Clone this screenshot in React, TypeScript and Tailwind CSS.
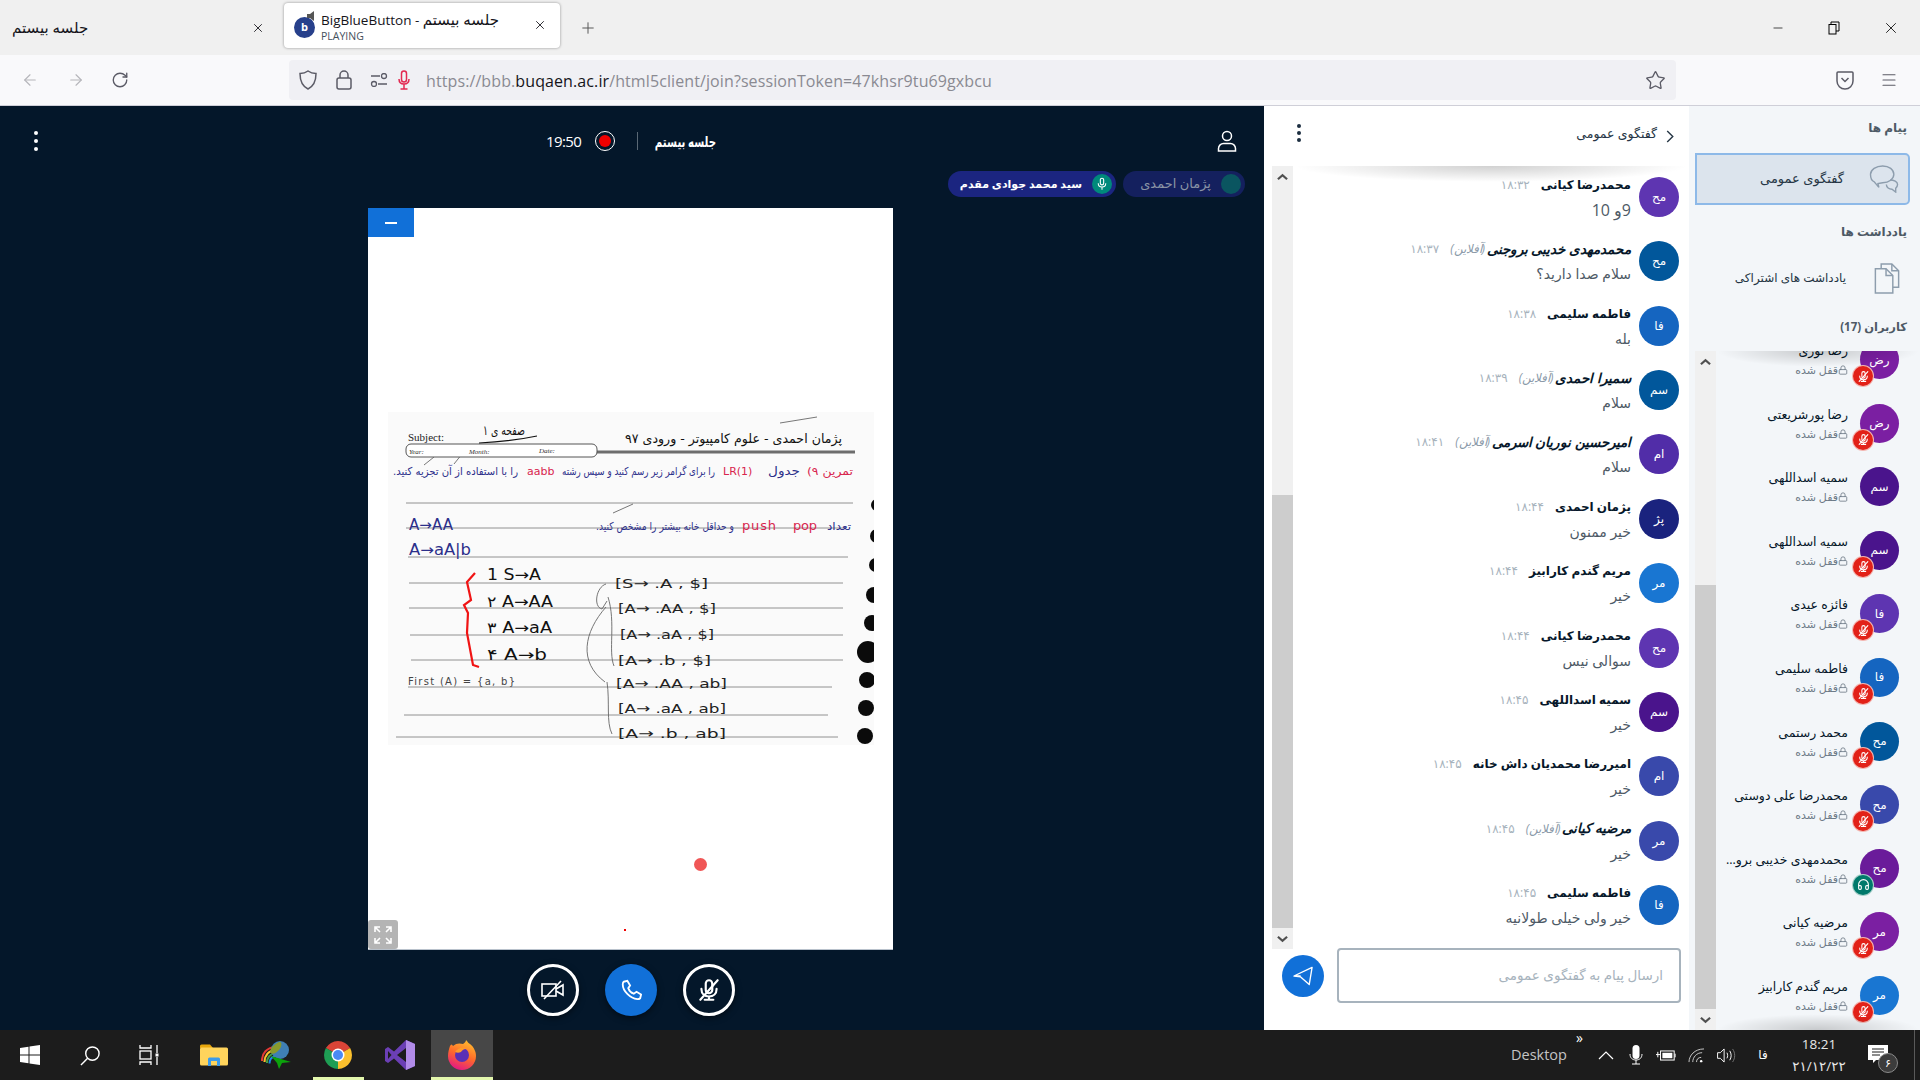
import { ArrowLeft, ArrowRight, Headphones, Lock, Menu, Minus, Plus, RotateCw, Star, X } from "lucide-react";

const messages = [
  { name: "محمدرضا کیانی", time: "۱۸:۳۲", text: "9\u0648 10", color: "bg-[#5e35b1]", short: "مح", big: true },
  { name: "محمدمهدی خدیبی بروجنی", time: "۱۸:۳۷", text: "سلام صدا دارید؟", color: "bg-[#01579b]", short: "مح", offline: true },
  { name: "فاطمه سلیمی", time: "۱۸:۳۸", text: "بله", color: "bg-[#1565c0]", short: "فا" },
  { name: "سمیرا احمدی", time: "۱۸:۳۹", text: "سلام", color: "bg-[#01579b]", short: "سم", offline: true },
  { name: "امیرحسین نوریان اسرمی", time: "۱۸:۴۱", text: "سلام", color: "bg-[#512da8]", short: "ام", offline: true },
  { name: "پژمان احمدی", time: "۱۸:۴۴", text: "خیر ممنون", color: "bg-[#1a237e]", short: "پژ" },
  { name: "مریم گندم کارابیز", time: "۱۸:۴۴", text: "خیر", color: "bg-[#1976d2]", short: "مر" },
  { name: "محمدرضا کیانی", time: "۱۸:۴۴", text: "سوالی نیس", color: "bg-[#5e35b1]", short: "مح" },
  { name: "سمیه اسداللهی", time: "۱۸:۴۵", text: "خیر", color: "bg-[#4a148c]", short: "سم" },
  { name: "امیررضا محمدیان داش خانه", time: "۱۸:۴۵", text: "خیر", color: "bg-[#3949ab]", short: "ام" },
  { name: "مرضیه کیانی", time: "۱۸:۴۵", text: "خیر", color: "bg-[#3949ab]", short: "مر", offline: true },
  { name: "فاطمه سلیمی", time: "۱۸:۴۵", text: "خیر ولی خیلی طولانیه", color: "bg-[#1565c0]", short: "فا" },
];

const users = [
  { name: "رضا نوری", color: "bg-[#7b1fa2]", short: "رض", badge: "mute" },
  { name: "رضا پورشریعتی", color: "bg-[#7b1fa2]", short: "رض", badge: "mute" },
  { name: "سمیه اسداللهی", color: "bg-[#4a148c]", short: "سم" },
  { name: "سمیه اسداللهی", color: "bg-[#4a148c]", short: "سم", badge: "mute" },
  { name: "فائزه عیدی", color: "bg-[#5e35b1]", short: "فا", badge: "mute" },
  { name: "فاطمه سلیمی", color: "bg-[#1565c0]", short: "فا", badge: "mute" },
  { name: "محمد رستمی", color: "bg-[#01579b]", short: "مح", badge: "mute" },
  { name: "محمدرضا علی دوستی", color: "bg-[#3949ab]", short: "مح", badge: "mute" },
  { name: "محمدمهدی خدیبی برو...", color: "bg-[#6a1b9a]", short: "مح", badge: "listen" },
  { name: "مرضیه کیانی", color: "bg-[#7b1fa2]", short: "مر", badge: "mute" },
  { name: "مریم گندم کارابیز", color: "bg-[#1976d2]", short: "مر", badge: "mute" },
];

const items = [
  { x: 227, y: 176, w: 93, t: "[S→ .A , $]" },
  { x: 230, y: 201, w: 98, t: "[A→ .AA , $]" },
  { x: 232, y: 227, w: 94, t: "[A→ .aA , $]" },
  { x: 230, y: 253, w: 93, t: "[A→ .b , $]" },
  { x: 228, y: 276, w: 111, t: "[A→ .AA , ab]" },
  { x: 230, y: 301, w: 108, t: "[A→ .aA , ab]" },
  { x: 230, y: 326, w: 108, t: "[A→ .b , ab]" },
];

function MutedMic({ className }: { className?: string }) {
  return (
    <svg viewBox="0 0 24 24" fill="none" stroke="currentColor" strokeWidth="2" strokeLinecap="round" className={className}>
      <rect x="9" y="3" width="6" height="12" rx="3" />
      <path d="M5 11c0 4.500 3 7 7 7s7-2.500 7-7M12 18v3M8 21h8M4 21 20 3" />
    </svg>
  );
}

function ChevronScroll({ down }: { down?: boolean }) {
  return (
    <svg viewBox="0 0 12 8" className="w-[11px] h-[8px]" fill="none" stroke="#505050" strokeWidth="2.400">
      <path d={down ? "M1 1.500l5 4.500 5-4.500" : "M1 6.500l5-4.500 5 4.500"} />
    </svg>
  );
}

function Scrollbar({ thumbTop, thumbBottom }: { thumbTop: string; thumbBottom: string }) {
  return (
    <div className="w-[21px] h-full bg-[#f0f0f0] flex flex-col shrink-0">
      <div className="h-[21px] flex items-center justify-center shrink-0"><ChevronScroll /></div>
      <div className="flex-1 flex flex-col">
        <div className={thumbTop} />
        <div className={thumbBottom} />
      </div>
      <div className="h-[21px] flex items-center justify-center shrink-0"><ChevronScroll down /></div>
    </div>
  );
}

function ChatRow({ m }: { m: (typeof messages)[number] }) {
  return (
    <div className="h-[64.36px] flex items-start shrink-0" dir="rtl">
      <div className={`w-[40px] h-[40px] rounded-full ${m.color} text-white text-[12px] flex items-center justify-center shrink-0`}>{m.short}</div>
      <div className="mr-[8px]">
        <div className="h-[16px] flex items-center whitespace-nowrap">
          <span className={`font-bold text-[#06172a] ${m.offline ? "italic text-[13.500px]" : "text-[12px]"}`}>{m.name}</span>
          {m.offline && <span className="mr-[2px] text-[12px] italic text-[#8b9aa9]">(آفلاین)</span>}
          <span className="mr-[11px] text-[12px] text-[#a7b3bd]">{m.time}</span>
        </div>
        <div className={`mt-[7px] leading-[20px] text-[#4e5a66] whitespace-nowrap ${m.big ? "text-[16px]" : "text-[14px]"}`}>{m.text}</div>
      </div>
    </div>
  );
}

function UserRow({ u }: { u: (typeof users)[number] }) {
  return (
    <div className="h-[63.6px] flex items-start shrink-0" dir="rtl">
      <div className={`relative w-[39px] h-[39px] rounded-full ${u.color} text-white text-[12px] flex items-center justify-center shrink-0`}>
        {u.short}
        {u.badge === "mute" && (
          <div className="absolute left-[-7px] top-[26px] w-[20px] h-[20px] rounded-full bg-[#e22118] ring-1 ring-[#f3b5b0] flex items-center justify-center text-white">
            <MutedMic className="w-[13px] h-[13px]" />
          </div>
        )}
        {u.badge === "listen" && (
          <div className="absolute left-[-7px] top-[26px] w-[20px] h-[20px] rounded-full bg-[#00796b] ring-1 ring-[#a5cfc9] flex items-center justify-center text-white">
            <Headphones className="w-[13px] h-[13px]" />
          </div>
        )}
      </div>
      <div className="mr-[12px] pt-[3px]">
        <div className="h-[16px] text-[12.500px] leading-[16px] text-[#06172a] whitespace-nowrap">{u.name}</div>
        <div className="mt-[4px] flex items-center text-[11px] leading-[14px] text-[#6d7a87]">
          <Lock className="w-[10px] h-[10px]" />
          <span>قفل شده</span>
        </div>
      </div>
    </div>
  );
}

function NotesPhoto() {
  const rtl = { direction: "rtl" as const, textAnchor: "start" as const };
  const ink = "#2c2f8a";
  const red = "#d8254e";
  return (
    <svg viewBox="0 0 486 333" className="w-[486px] h-[333px] bg-[#fafafa]" fontFamily="'DejaVu Sans', sans-serif">
      <g stroke="#777" strokeWidth="0.800">
        <path d="M18 91H465M18 116H458M20 145H460M21 171H455M21 196H455M22 223H455M23 248H455M20 275H444M16 303H440M8 325H450" />
      </g>
      <path d="M392 11L429 5M225 101L245 92M36 53L46 45M66 52L74 42" stroke="#555" strokeWidth="0.800" fill="none" />
      <path d="M208 40H467" stroke="#6d6d6d" strokeWidth="3" />
      <rect x="18" y="32" width="191" height="13" rx="5" fill="#fff" stroke="#555" strokeWidth="1" />
      <text x="20" y="29" fontFamily="'Liberation Serif', serif" fontSize="11" fill="#222">Subject:</text>
      <text x="21" y="42" fontFamily="'Liberation Serif', serif" fontStyle="italic" fontSize="7" fill="#333">Year:</text>
      <text x="81" y="42" fontFamily="'Liberation Serif', serif" fontStyle="italic" fontSize="7" fill="#333">Month:</text>
      <text x="151" y="41" fontFamily="'Liberation Serif', serif" fontStyle="italic" fontSize="7" fill="#333">Date:</text>
      <text x="137" y="23" fontSize="13" fill="#111" style={rtl} textLength="42" lengthAdjust="spacingAndGlyphs">صفحه ی ۱</text>
      <path d="M91 31C110 30 130 28 149 24" stroke="#111" fill="none" strokeWidth="1.200" />
      <text x="454" y="31" fontSize="13" fill="#111" style={rtl} textLength="217" lengthAdjust="spacingAndGlyphs">پژمان احمدی - علوم کامپیوتر - ورودی ۹۷</text>

      <text x="465" y="63" fontSize="11" fill={red} style={rtl} textLength="46" lengthAdjust="spacingAndGlyphs">تمرین ۹)</text>
      <text x="412" y="63" fontSize="12" fill={ink} style={rtl} textLength="32" lengthAdjust="spacingAndGlyphs">جدول</text>
      <text x="335" y="63" fontSize="11" fill={red}>LR(1)</text>
      <text x="327" y="63" fontSize="11" fill={ink} style={rtl} textLength="153" lengthAdjust="spacingAndGlyphs">را برای گرامر زیر رسم کنید و سپس رشته</text>
      <text x="139" y="63" fontSize="11" fill={red}>aabb</text>
      <text x="130" y="63" fontSize="11" fill={ink} style={rtl} textLength="125" lengthAdjust="spacingAndGlyphs">را با استفاده از آن تجزیه کنید.</text>

      <text x="21" y="118" fontSize="15" fill={ink} textLength="44" lengthAdjust="spacingAndGlyphs">A→AA</text>
      <text x="463" y="118" fontSize="11" fill={ink} style={rtl} textLength="24" lengthAdjust="spacingAndGlyphs">تعداد</text>
      <text x="405" y="118" fontSize="13" fill={red} textLength="24">pop</text>
      <text x="354" y="118" fontSize="13" fill={red} textLength="34">push</text>
      <text x="346" y="118" fontSize="11" fill={ink} style={rtl} textLength="138" lengthAdjust="spacingAndGlyphs">و حداقل خانه بیشتر را مشخص کنید.</text>
      <text x="21" y="143" fontSize="15" fill={ink} textLength="62" lengthAdjust="spacingAndGlyphs">A→aA|b</text>

      <path d="M87 161L79 170L83 188L76 193L80 201L79 221L85 253L91 255" fill="none" stroke="#f01414" strokeWidth="2.200" />
      <g fontSize="15" fill="#111">
        <text x="99" y="168" textLength="54" lengthAdjust="spacingAndGlyphs">1 S→A</text>
        <text x="99" y="195" textLength="66" lengthAdjust="spacingAndGlyphs">۲ A→AA</text>
        <text x="99" y="221" textLength="65" lengthAdjust="spacingAndGlyphs">۳ A→aA</text>
        <text x="99" y="248" textLength="60" lengthAdjust="spacingAndGlyphs">۴ A→b</text>
      </g>
      <g fontSize="13" fill="#222">
        {items.map((it) => (
          <text key={it.t} x={it.x} y={it.y} textLength={it.w} lengthAdjust="spacingAndGlyphs">{it.t}</text>
        ))}
      </g>
      <text x="20" y="273" fontSize="10" fill="#444" textLength="107">First (A) = {"{a, b}"}</text>
      <path d="M218 172C208 175 205 195 214 197M214 197L219 189M218 195C196 220 190 250 217 270M220 185C228 210 220 240 226 254M219 270C222 290 218 310 224 322" fill="none" stroke="#666" strokeWidth="0.900" />
      <g fill="#0b0b0b">
        <circle cx="489" cy="93" r="6" />
        <circle cx="489" cy="124" r="7" />
        <circle cx="488" cy="153" r="7" />
        <circle cx="486" cy="183" r="8" />
        <circle cx="484" cy="211" r="8" />
        <circle cx="480" cy="240" r="11" />
        <circle cx="479" cy="268" r="8" />
        <circle cx="478" cy="296" r="8" />
        <circle cx="477" cy="324" r="8" />
      </g>
    </svg>
  );
}

function FolderIcon() {
  return (
    <svg viewBox="0 0 28 22" className="w-[28px] h-[22px]">
      <path d="M0 2a1.500 1.500 0 0 1 1.500-1.500H10L13 4H0z" fill="#e8a70c" />
      <rect y="3.500" width="28" height="18" rx="1.500" fill="#ffd45c" />
      <path d="M8 22V15a1.500 1.500 0 0 1 1.500-1.500h9A1.500 1.500 0 0 1 20 15v7h-3v-5h-6v5z" fill="#3d9be9" />
    </svg>
  );
}

function IdmIcon() {
  return (
    <svg viewBox="0 0 30 28" className="w-[30px] h-[28px]">
      <path d="M1 20C1 12 6 7 14 6" fill="none" stroke="#e53935" strokeWidth="2.200" />
      <path d="M3.500 21C3.500 15 7 10 14 9" fill="none" stroke="#fbc02d" strokeWidth="2.200" />
      <path d="M6 22C6 17 9 13 14 12" fill="none" stroke="#43a047" strokeWidth="2.200" />
      <path d="M8.500 22.500C8.500 19 10.500 16 14 15" fill="none" stroke="#1e88e5" strokeWidth="2" />
      <circle cx="19" cy="9" r="9" fill="#3f7fb5" />
      <path d="M11 6c3-3 6-5 8-5s2 5-1 8-6 5-8 3 0-4 1-6z" fill="#8a9a2d" />
      <path d="M10 15L30 21L21 22L18 28L16 22z" fill="#0ca30c" />
    </svg>
  );
}

function ChromeIcon() {
  return (
    <svg viewBox="0 0 28 28" className="w-[28px] h-[28px]">
      <path d="M14 14L1.880 7A14 14 0 0 1 26.120 7Z" fill="#db4437" />
      <path d="M14 14L26.120 7A14 14 0 0 1 14 28Z" fill="#fbc02d" />
      <path d="M14 14L14 28A14 14 0 0 1 1.880 7Z" fill="#1e9e54" />
      <circle cx="14" cy="14" r="6.500" fill="#fff" />
      <circle cx="14" cy="14" r="5" fill="#4a8af4" />
    </svg>
  );
}

function VsIcon() {
  return (
    <svg viewBox="0 0 30 30" className="w-[30px] h-[30px]">
      <path d="M21 0L30 4V26L21 30L9 18.500L3 23L0 21V9L3 7L9 11.500ZM21 8L12 15L21 22ZM3 11V19L6.500 15Z" fill="#6b3fb5" fillRule="evenodd" />
      <path d="M21 0L30 4V26L21 30V22V8Z" fill="#b18be8" />
    </svg>
  );
}

function FirefoxIcon() {
  return (
    <svg viewBox="0 0 30 30" className="w-[30px] h-[30px]">
      <defs>
        <linearGradient id="ff" x1="0.700" y1="0" x2="0.300" y2="1">
          <stop offset="0" stopColor="#ffbd2e" />
          <stop offset="0.500" stopColor="#ff6a2a" />
          <stop offset="1" stopColor="#e31587" />
        </linearGradient>
      </defs>
      <path d="M3 6C4 4 5 4 6 6C9 3 13 3 16 4C18 3 19 1 19 0C21 2 21 3 23 4C27 7 29 12 29 16A14 14 0 0 1 1 16C1 12 2 9 3 6Z" fill="url(#ff)" />
      <circle cx="15" cy="15" r="7" fill="#5b2fb5" />
      <path d="M8 12c2-4 8-6 12-3-3-.500-5 1-6 3-2 1-4 1-6 0z" fill="#ff9a2a" />
    </svg>
  );
}

export default function App() {
  return (
    <div className="w-[1920px] h-[1080px] flex flex-col overflow-hidden font-['Open_Sans','DejaVu_Sans',sans-serif]">
      {/* browser tabs */}
      <div className="h-[55px] bg-[#f0f0f0] flex items-center shrink-0">
        <div className="w-[284px] h-full flex items-center pl-[12px] pr-[19px] justify-between text-[#15141a]">
          <span dir="rtl" className="text-[15px]">جلسه بیستم</span>
          <X className="w-[14px] h-[14px]" strokeWidth={1.500} />
        </div>
        <div className="w-[276px] h-[45px] mb-[5px] bg-white rounded-[4px] shadow-[0_0_3px_rgba(0,0,0,0.4)] flex items-center pl-[10px] pr-[13px]">
          <div className="relative w-[21px] h-[21px] rounded-full bg-[#27408b] mr-[6px] mt-[4px] flex items-center justify-center text-white text-[11px] font-bold">
            b
            <svg viewBox="0 0 12 12" className="absolute -top-[7px] -right-[3px] w-[12px] h-[12px]" fill="#555"><path d="M1 4h3l4-3v10L4 8H1z" /></svg>
          </div>
          <div className="flex-1 flex flex-col pt-[3px] text-[#15141a]">
            <div className="text-[13.500px] leading-[18px] whitespace-nowrap" dir="ltr">
              BigBlueButton - <span className="text-[15px]">جلسه بیستم</span>
            </div>
            <div className="text-[10.500px] leading-[15px] text-[#44505c]">PLAYING</div>
          </div>
          <X className="w-[14px] h-[14px] text-[#15141a]" strokeWidth={1.500} />
        </div>
        <Plus className="ml-[19px] w-[18px] h-[18px] text-[#555]" strokeWidth={1.300} />
        <div className="ml-auto flex items-center text-black">
          <div className="w-[57px] flex justify-center"><Minus className="w-[14px] h-[14px]" strokeWidth={1.200} /></div>
          <div className="w-[56px] flex justify-center">
            <svg viewBox="0 0 12 14" className="w-[12px] h-[14px]" fill="none" stroke="#000"><path d="M3 3V1h8v9H8" /><rect x="1" y="3.500" width="7" height="9.500" /></svg>
          </div>
          <div className="w-[58px] flex justify-center"><X className="w-[18px] h-[18px]" strokeWidth={1.100} /></div>
        </div>
      </div>

      {/* browser toolbar */}
      <div className="h-[51px] bg-[#f9f9fb] border-b border-[#cfcfd8] flex items-center shrink-0">
        <div className="w-[289px] flex items-center pl-[21px] text-[#b5b5ba]">
          <ArrowLeft className="w-[18px] h-[18px]" strokeWidth={1.500} />
          <ArrowRight className="ml-[28px] w-[18px] h-[18px]" strokeWidth={1.500} />
          <RotateCw className="ml-[26px] w-[18px] h-[18px] text-[#5b5b66]" strokeWidth={1.800} />
        </div>
        <div className="w-[1387px] h-[40px] bg-[#f0f0f4] rounded-[4px] flex items-center pl-[10px] pr-[10px] text-[#5b5b66]">
          <svg viewBox="0 0 18 20" className="w-[18px] h-[20px]" fill="none" stroke="currentColor" strokeWidth="1.500"><path d="M9 1c2 1.500 5 2.500 8 2.500C17 11 15 16 9 19 3 16 1 11 1 3.500 4 3.500 7 2.500 9 1z" /></svg>
          <svg viewBox="0 0 16 20" className="ml-[19px] w-[16px] h-[20px]" fill="none" stroke="currentColor" strokeWidth="1.500"><rect x="1" y="8" width="14" height="11" rx="2" /><path d="M4 8V5a4 4 0 0 1 8 0v3" /></svg>
          <svg viewBox="0 0 18 14" className="ml-[18px] w-[18px] h-[14px]" fill="none" stroke="currentColor" strokeWidth="1.300"><path d="M1 3h9M8 11h9" /><circle cx="14" cy="3" r="2.500" /><circle cx="4" cy="11" r="2.500" /></svg>
          <svg viewBox="0 0 12 20" className="ml-[10px] w-[12px] h-[20px]" fill="none" stroke="#e22850" strokeWidth="1.500"><rect x="3.500" y="1" width="5" height="11" rx="2.500" /><path d="M1 9c0 3 2 5 5 5s5-2 5-5M6 14v5M2.500 19h7" /></svg>
          <div className="ml-[16px] pt-[2px] text-[16px] tracking-[0.1px] text-[#8a8a92] whitespace-nowrap">
            https://bbb.<span className="text-[#15141a]">buqaen.ac.ir</span>/html5client/join?sessionToken=47khsr9tu69gxbcu
          </div>
          <Star className="ml-auto w-[21px] h-[21px]" strokeWidth={1.500} />
        </div>
        <div className="flex items-center text-[#5b5b66]">
          <div className="ml-[160px] w-[18px]">
            <svg viewBox="0 0 18 20" className="w-[18px] h-[20px]" fill="none" stroke="currentColor" strokeWidth="1.500"><path d="M2 2h14a1 1 0 0 1 1 1v8a8 8 0 0 1-16 0V3a1 1 0 0 1 1-1z" /><path d="M5.500 8l3.500 3.500L12.500 8" /></svg>
          </div>
          <Menu className="ml-[26px] w-[18px] h-[18px]" strokeWidth={1.500} />
        </div>
      </div>

      {/* meeting */}
      <div className="flex-1 flex min-h-0">
        {/* presentation area */}
        <div className="w-[1264px] bg-[#04172a] flex flex-col shrink-0">
          <div className="h-[65px] flex items-center justify-between pl-[31px] pr-[27px] pt-[5px] shrink-0 text-white">
            <div className="flex flex-col gap-[4px] w-[10px] items-center">
              <div className="w-[4px] h-[4px] rounded-full bg-white" />
              <div className="w-[4px] h-[4px] rounded-full bg-white" />
              <div className="w-[4px] h-[4px] rounded-full bg-white" />
            </div>
            <div className="flex items-center ml-[4px]">
              <span className="text-[15px] tracking-[-0.6px] w-[35px]">19:50</span>
              <div className="ml-[14px] w-[20px] h-[20px] rounded-full border border-white flex items-center justify-center">
                <div className="w-[12px] h-[12px] rounded-full bg-[#f00000]" />
              </div>
              <div className="ml-[22px] w-px h-[18px] bg-[#5a6875]" />
              <div className="ml-[18px] w-[60px] flex justify-end whitespace-nowrap">
                <span className="text-[15px] font-bold origin-right scale-x-[0.68] shrink-0" dir="rtl">جلسه بیستم</span>
              </div>
            </div>
            <svg viewBox="0 0 20 22" className="w-[20px] h-[22px]" fill="none" stroke="#fff" strokeWidth="1.500">
              <circle cx="10" cy="6" r="4.500" />
              <path d="M1.500 21v-2.500c0-3 2.500-5 5-5h7c2.500 0 5 2 5 5V21z" />
            </svg>
          </div>
          <div className="h-[26px] flex justify-end gap-[7px] pr-[19px] shrink-0">
            <div className="h-[26px] w-[168px] rounded-[13px] bg-[#1b2580] flex items-center justify-end pr-[4px] text-white text-[11px] font-bold" dir="ltr">
              <span dir="rtl" className="whitespace-nowrap">سید محمد جوادی مقدم</span>
              <div className="ml-[10px] w-[20px] h-[20px] rounded-full bg-[#00897b] flex items-center justify-center">
                <svg viewBox="0 0 12 16" className="w-[10px] h-[14px]" fill="none" stroke="#fff" strokeWidth="1.300"><rect x="4" y="1" width="4" height="8" rx="2" /><path d="M1.500 7c0 3 2 4.500 4.500 4.500S10.500 10 10.500 7M6 11.500V15" /></svg>
              </div>
            </div>
            <div className="h-[26px] w-[122px] rounded-[13px] bg-[#14205e] flex items-center justify-end pr-[4px] text-[#8a94a5] text-[13px]" dir="ltr">
              <span dir="rtl" className="whitespace-nowrap">پژمان احمدی</span>
              <div className="ml-[10px] w-[20px] h-[20px] rounded-full bg-[#0a5560]" />
            </div>
          </div>
          <div className="mt-[11px] flex justify-center pr-[3px]">
            <div className="relative w-[525px] h-[742px] bg-white flex items-center justify-center border-b border-[#b9c2cc]">
              <NotesPhoto />
              <div className="absolute left-0 top-0 w-[46px] h-[29px] bg-[#1170d8] flex items-center justify-center">
                <div className="w-[12px] h-[2px] bg-white" />
              </div>
              <div className="absolute left-0 bottom-0 w-[30px] h-[29px] bg-[#b4b4b4] rounded-[3px] flex items-center justify-center">
                <svg viewBox="0 0 20 20" className="w-[20px] h-[20px]" fill="none" stroke="#fff" strokeWidth="1.600"><path d="M2 7V2h5M2 2l5 5M18 7V2h-5M18 2l-5 5M2 13v5h5M2 18l5-5M18 13v5h-5M18 18l-5-5" /></svg>
              </div>
              <div className="absolute left-[326px] top-[650px] w-[13px] h-[13px] rounded-full bg-[#f05656]" />
              <div className="absolute left-[256px] top-[721px] w-[2px] h-[2px] bg-[#f00000]" />
            </div>
          </div>
          <div className="mt-[14px] flex justify-center gap-[26px] pr-[3px]">
            <div className="w-[52px] h-[52px] rounded-full border-[3px] border-white flex items-center justify-center shadow-[0_2px_6px_rgba(0,0,0,0.5)]">
              <svg viewBox="0 0 24 20" className="w-[24px] h-[20px]" fill="none" stroke="#fff" strokeWidth="1.600"><rect x="1" y="4" width="14" height="12" /><path d="M15 9l7-4v10l-7-4M3 19L20 1" /></svg>
            </div>
            <div className="w-[52px] h-[52px] rounded-full bg-[#1170d8] flex items-center justify-center shadow-[0_2px_6px_rgba(0,0,0,0.5)]">
              <svg viewBox="0 0 24 24" className="w-[22px] h-[22px]" fill="none" stroke="#fff" strokeWidth="2"><path d="M4 3l4-1 3 5-2 3c1 3 3 5 6 6l3-2 5 3-1 4c-1 1-2 1-3 1C11 21 3 13 3 6c0-1 0-2 1-3z" /></svg>
            </div>
            <div className="w-[52px] h-[52px] rounded-full border-[3px] border-white flex items-center justify-center shadow-[0_2px_6px_rgba(0,0,0,0.5)] text-white">
              <MutedMic className="w-[26px] h-[26px]" />
            </div>
          </div>
        </div>

        {/* chat panel */}
        <div className="w-[425px] bg-white flex flex-col shrink-0">
          <div className="h-[60px] flex items-start justify-between pl-[33px] pr-[15px] pt-[18px] shrink-0">
            <div className="flex flex-col gap-[3px]">
              <div className="w-[4px] h-[4px] rounded-full bg-[#1c2e40]" />
              <div className="w-[4px] h-[4px] rounded-full bg-[#1c2e40]" />
              <div className="w-[4px] h-[4px] rounded-full bg-[#1c2e40]" />
            </div>
            <div className="flex items-center gap-[9px] pt-[1px]">
              <span className="text-[12.500px] text-[#263645]" dir="rtl">گفتگوی عمومی</span>
              <svg viewBox="0 0 8 14" className="w-[8px] h-[13px] mt-[4px]" fill="none" stroke="#263645" strokeWidth="1.500"><path d="M1 1l6 6-6 6" /></svg>
            </div>
          </div>
          <div className="h-[783px] pl-[8px] flex shrink-0">
            <Scrollbar thumbTop="h-[308px] bg-[#f0f0f0]" thumbBottom="flex-1 bg-[#cdcdcd]" />
            <div className="relative flex-1 flex flex-col pt-[11px] pr-[10px] overflow-hidden">
              <div className="absolute left-0 right-0 top-0 h-[16px] bg-[radial-gradient(ellipse_at_top,rgba(0,0,0,0.18),rgba(0,0,0,0)_70%)]" />
              {messages.map((m, i) => (
                <ChatRow key={i} m={m} />
              ))}
            </div>
          </div>
          <div className="-mt-[1px] flex pl-[18px] pr-[8px]">
            <div className="mt-[7px] w-[42px] h-[42px] rounded-full bg-[#1170d8] flex items-center justify-center">
              <svg viewBox="0 0 22 20" className="w-[21px] h-[20px]" fill="none" stroke="#fff" strokeWidth="1.400"><path d="M1 10L20 1L17 19L8 11ZM1 10H8" strokeLinejoin="round" /></svg>
            </div>
            <div className="ml-[13px] flex-1 h-[55px] border-2 border-[#a7b3bd] rounded-[4px] flex items-center pr-[16px] text-[13.500px] text-[#a7b3bd]" dir="rtl">
              ارسال پیام به گفتگوی عمومی
            </div>
          </div>
        </div>

        {/* sidebar */}
        <div className="flex-1 bg-[#f3f6f9] flex flex-col min-w-0">
          <div className="h-[47px] pl-[13px] pr-[13px] pt-[13px] text-[12px] font-bold text-[#4e5a66]" dir="rtl">پیام ها</div>
          <div className="ml-[6px] mr-[10px] h-[52px] bg-[#dce4ed] border-2 border-[#8db9e8] rounded-r-[5px] flex items-center justify-end pr-[8px] shrink-0">
            <span className="text-[13px] text-[#263645]" dir="rtl">گفتگوی عمومی</span>
            <svg viewBox="0 0 32 30" className="ml-[25px] w-[31px] h-[28px]" fill="none" stroke="#8d9dad" strokeWidth="1.500">
              <path d="M14 1c7 0 12 4 12 9s-5 9-12 9l-5 1 1 4-5-6c-3-1-4-5-4-8 0-5 6-9 13-9z" />
              <path d="M22 16c4 0 8 2 8 5 0 2-1 3-2 4v4l-4-3c-3 0-6-2-6-5" />
            </svg>
          </div>
          <div className="h-[48px] pt-[18px] px-[13px] text-[12px] font-bold text-[#4e5a66] shrink-0" dir="rtl">یادداشت ها</div>
          <div className="h-[50px] mr-[10px] flex items-center justify-end pr-[10px] shrink-0">
            <span className="text-[12px] text-[#263645]" dir="rtl">یادداشت های اشتراکی</span>
            <svg viewBox="0 0 26 32" className="ml-[28px] w-[26px] h-[31px]" fill="none" stroke="#8d9dad" strokeWidth="1.500">
              <path d="M7 6V1h11l7 7v17h-6" />
              <path d="M1 6h11l7 7v18H1z" />
              <path d="M12 6v7h7M18 1v7h7" />
            </svg>
          </div>
          <div className="h-[48px] pt-[15px] px-[13px] text-[11.500px] font-bold text-[#4e5a66] shrink-0" dir="rtl">کاربران (17)</div>
          <div className="flex-1 min-h-0 pl-[6px] flex">
            <Scrollbar thumbTop="h-[213px] bg-[#f0f0f0]" thumbBottom="flex-1 bg-[#cdcdcd]" />
            <div className="relative flex-1 overflow-hidden">
              <div className="absolute left-0 right-0 top-0 h-[16px] z-10 bg-[radial-gradient(ellipse_at_top,rgba(0,0,0,0.18),rgba(0,0,0,0)_70%)]" />
              <div className="absolute left-0 right-0 bottom-0 h-[16px] z-10 bg-[radial-gradient(ellipse_at_bottom,rgba(0,0,0,0.18),rgba(0,0,0,0)_70%)]" />
              <div className="-mt-[11px] pr-[21px] flex flex-col">
                {users.map((u, i) => (
                  <UserRow key={i} u={u} />
                ))}
              </div>
            </div>
          </div>
        </div>
      </div>

      {/* windows taskbar */}
      <div className="h-[50px] bg-[#1c1c1c] flex items-stretch shrink-0 text-white">
        <div className="w-[60px] flex items-center justify-center">
          <svg viewBox="0 0 20 20" className="w-[20px] h-[20px]" fill="#fff"><path d="M0 3l8.500-1.200V9.500H0zM9.500 1.600L20 0v9.500H9.500zM0 10.500h8.500v7.700L0 17zM9.500 10.500H20V20L9.500 18.400z" /></svg>
        </div>
        <div className="w-[60px] flex items-center justify-center">
          <svg viewBox="0 0 22 22" className="w-[21px] h-[21px]" fill="none" stroke="#fff" strokeWidth="1.500"><circle cx="13" cy="9" r="7" /><path d="M8 14L1 21" /></svg>
        </div>
        <div className="w-[58px] flex items-center justify-center">
          <svg viewBox="0 0 20 20" className="w-[20px] h-[20px]" fill="none" stroke="#fff" strokeWidth="1.300"><path d="M1 0v3h11V0M1 20v-3h11v3" /><rect x="1" y="6" width="11" height="8" /><path d="M18 0v8M18 12v8" /><rect x="16.500" y="8.500" width="3" height="3" fill="#fff" stroke="none" /></svg>
        </div>
        <div className="w-[62px] ml-[5px] flex items-center justify-center"><FolderIcon /></div>
        <div className="w-[62px] flex items-center justify-center"><IdmIcon /></div>
        <div className="w-[62px] flex items-center justify-center relative">
          <ChromeIcon />
          <div className="absolute left-[6px] right-[5px] bottom-0 h-[3px] bg-[#e3f7ad]" />
        </div>
        <div className="w-[62px] flex items-center justify-center"><VsIcon /></div>
        <div className="w-[62px] flex items-center justify-center relative bg-[#474747]">
          <FirefoxIcon />
          <div className="absolute left-0 right-0 bottom-0 h-[3px] bg-[#e3f7ad]" />
        </div>
        <div className="flex-1" />
        <div className="w-[90px] flex items-center pl-[11px] relative text-[14.500px] text-[#c4c4c4]">
          Desktop
          <span className="absolute left-[76px] top-[1px] text-[14px] leading-[14px] text-white">»</span>
        </div>
        <div className="w-[32px] flex items-center justify-center">
          <svg viewBox="0 0 16 10" className="w-[16px] h-[10px]" fill="none" stroke="#fff" strokeWidth="1.200"><path d="M1 9l7-7 7 7" /></svg>
        </div>
        <div className="w-[28px] flex items-center justify-center">
          <svg viewBox="0 0 14 20" className="w-[14px] h-[20px]" fill="#fff"><rect x="3.500" y="0" width="7" height="14" rx="3.500" /><path d="M1 9c0 4 2.500 6 6 6s6-2 6-6M7 15v4M3 19h8" fill="none" stroke="#fff" strokeWidth="1" /></svg>
        </div>
        <div className="w-[32px] flex items-center justify-center">
          <svg viewBox="0 0 22 14" className="w-[20px] h-[13px]" fill="none" stroke="#fff" strokeWidth="1.100"><rect x="5" y="2" width="15" height="10" /><rect x="7" y="4" width="11" height="6" fill="#fff" stroke="none" /><path d="M21 5v4M0 6h5M2 3v6" /></svg>
        </div>
        <div className="w-[29px] flex items-center justify-center">
          <svg viewBox="0 0 18 16" className="w-[17px] h-[15px]" fill="none" stroke="#cfcfcf" strokeWidth="1"><path d="M1 15C1 8 7 1 17 1M5 15C5 10 9 5 15 5M9 15C9 12 11 10 14 10" /><circle cx="14" cy="14" r="1.300" fill="#fff" stroke="none" /></svg>
        </div>
        <div className="w-[30px] flex items-center justify-center">
          <svg viewBox="0 0 20 16" className="w-[20px] h-[15px]" fill="none" stroke="#fff" strokeWidth="1"><path d="M1 5h3l4-4v14l-4-4H1zM11 5c1 2 1 4 0 6M14 3c2 3 2 7 0 10" /><path d="M17 1c3 4 3 10 0 14" stroke="#777" /></svg>
        </div>
        <div className="w-[44px] flex items-center justify-center text-[12px] text-white" dir="rtl">فا</div>
        <div className="w-[68px] flex flex-col items-center justify-center text-[13.500px] leading-[22px] text-[#e8e8e8]">
          <div>18:21</div>
          <div>٢١/١٢/٢٢</div>
        </div>
        <div className="w-[50px] flex items-center justify-center relative">
          <svg viewBox="0 0 20 18" className="w-[20px] h-[18px] -mt-[3px]" fill="#fff"><path d="M0 0h20v15H8l-3 3v-3H0z" /><path d="M4 4h12M4 7h12M4 10h8" stroke="#1c1c1c" strokeWidth="1" /></svg>
          <div className="absolute left-[25px] top-[23px] w-[20px] h-[20px] rounded-full bg-[#3c3c3c] border border-[#8a8a8a] flex items-center justify-center text-[11px] text-white">۶</div>
        </div>
        <div className="w-[12px] border-r border-[#5a5a5a] mr-[5px]" />
      </div>
    </div>
  );
}
